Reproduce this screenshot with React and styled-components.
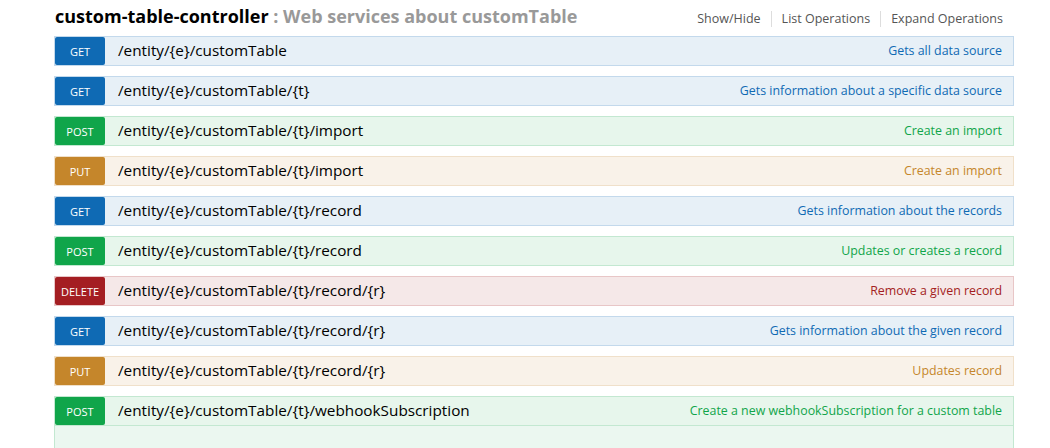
import React from 'react'
import styled, { createGlobalStyle } from 'styled-components'

const GlobalStyle = createGlobalStyle`
  body {
    margin: 0;
    background: #fff;
    font-family: "Open Sans", "Noto Sans", sans-serif;
  }
`

const methods = {
  get: { badge: '#0f6ab4', bg: '#e7f0f7', border: '#c3d9ec', text: '#0f6ab4' },
  post: { badge: '#10a54a', bg: '#e7f6ec', border: '#c3e8d1', text: '#10a54a' },
  put: { badge: '#c5862b', bg: '#f9f2e9', border: '#f0e0ca', text: '#c5862b' },
  delete: { badge: '#a41e22', bg: '#f5e8e8', border: '#e8c6c7', text: '#a41e22' },
}

const Page = styled.div`
  width: 960px;
  margin-left: 54px;
  padding-top: 4px;
`

const Header = styled.div`
  display: flex;
  align-items: center;
  justify-content: space-between;
  height: 24px;
  margin-bottom: 8px;
`

const Title = styled.h2`
  margin: 0 0 0 1px;
  font-size: 18px;
  font-weight: 700;
  color: #000;
  span {
    color: #999;
  }
`

const Options = styled.ul`
  display: flex;
  list-style: none;
  margin: 6px 11px 0 0;
  padding: 0;
`

const Option = styled.li`
  font-size: 12.5px;
  color: #555;
  padding: 0 10px;
  border-left: 1px solid #ddd;
  line-height: 16px;
  &:first-child {
    border-left: none;
  }
  &:last-child {
    padding-right: 0;
  }
`

const List = styled.div`
  display: flex;
  flex-direction: column;
  gap: 10px;
`

const Operation = styled.div`
  display: flex;
  flex-direction: column;
`

const Heading = styled.div`
  display: flex;
  align-items: center;
  height: 28px;
  background: ${p => methods[p.$m].bg};
  border: 1px solid ${p => methods[p.$m].border};
`

const Badge = styled.span`
  width: 50px;
  height: 28px;
  flex-shrink: 0;
  display: flex;
  align-items: center;
  justify-content: center;
  background: ${p => methods[p.$m].badge};
  border-radius: 2px;
  color: #fff;
  font-size: 11px;
  text-transform: uppercase;
`

const Path = styled.span`
  margin-left: 13px;
  margin-top: -3px;
  font-size: 15.3px;
  color: #000;
  flex: 1;
`

const Summary = styled.span`
  margin-right: 11px;
  margin-top: -1px;
  font-size: 12.4px;
  color: ${p => methods[p.$m].text};
`

const Content = styled.div`
  height: 40px;
  background: #ebf7f0;
  border: 1px solid #c3e8d1;
  border-top: none;
`

const ops = [
  ['get', '/entity/{e}/customTable', 'Gets all data source'],
  ['get', '/entity/{e}/customTable/{t}', 'Gets information about a specific data source'],
  ['post', '/entity/{e}/customTable/{t}/import', 'Create an import'],
  ['put', '/entity/{e}/customTable/{t}/import', 'Create an import'],
  ['get', '/entity/{e}/customTable/{t}/record', 'Gets information about the records'],
  ['post', '/entity/{e}/customTable/{t}/record', 'Updates or creates a record'],
  ['delete', '/entity/{e}/customTable/{t}/record/{r}', 'Remove a given record'],
  ['get', '/entity/{e}/customTable/{t}/record/{r}', 'Gets information about the given record'],
  ['put', '/entity/{e}/customTable/{t}/record/{r}', 'Updates record'],
  ['post', '/entity/{e}/customTable/{t}/webhookSubscription', 'Create a new webhookSubscription for a custom table', true],
]

export default function App() {
  return (
    <>
      <GlobalStyle />
      <Page>
        <Header>
          <Title>custom-table-controller <span>: Web services about customTable</span></Title>
          <Options>
            <Option>Show/Hide</Option>
            <Option>List Operations</Option>
            <Option>Expand Operations</Option>
          </Options>
        </Header>
        <List>
          {ops.map(([m, path, summary, open], i) => (
            <Operation key={i}>
              <Heading $m={m}>
                <Badge $m={m}>{m}</Badge>
                <Path>{path}</Path>
                <Summary $m={m}>{summary}</Summary>
              </Heading>
              {open && <Content />}
            </Operation>
          ))}
        </List>
      </Page>
    </>
  )
}
